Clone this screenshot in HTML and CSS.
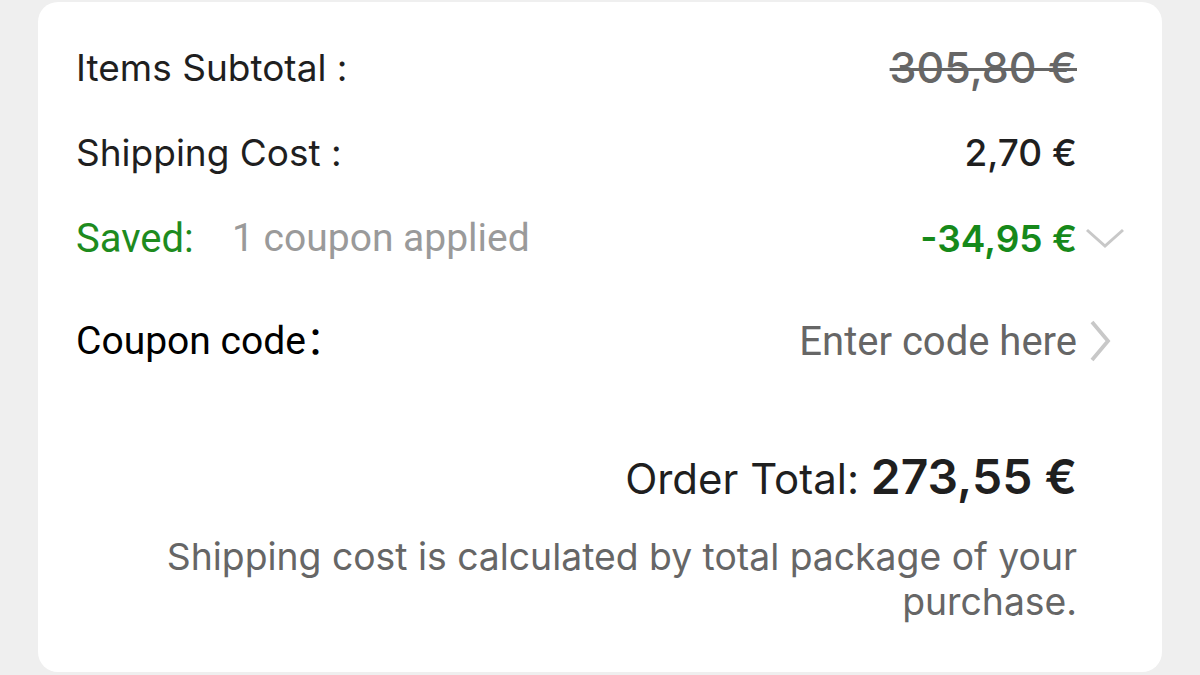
FILE: index.html
```html
<!DOCTYPE html>
<html lang="en">
<head>
  <meta charset="UTF-8">
  <meta name="viewport" content="width=device-width, initial-scale=1.0">
  <title>Order Summary</title>
  <link rel="stylesheet" href="styles.css">
</head>
<body>
  <div class="summary-card">
    <div class="summary-row row-subtotal">
      <span class="row-label">Items Subtotal :</span>
      <span class="row-value old-price">305,80 €</span>
      <span class="row-icon"></span>
    </div>
    <div class="summary-row row-shipping">
      <span class="row-label">Shipping Cost :</span>
      <span class="row-value">2,70 €</span>
      <span class="row-icon"></span>
    </div>
    <div class="summary-row row-saved">
      <span class="row-label saved-label">Saved:</span>
      <span class="coupon-count">1 coupon applied</span>
      <span class="row-value saved-value">-34,95 €</span>
      <span class="row-icon">
        <svg width="40" height="22" viewBox="0 0 40 22"><path d="M2 3 L20 19 L38 3" fill="none" stroke="#c8c8c8" stroke-width="3"/></svg>
      </span>
    </div>
    <div class="summary-row row-coupon">
      <span class="row-label coupon-label">Coupon code<span class="cjk-colon">：</span></span>
      <span class="row-value code-input">Enter code here</span>
      <span class="row-icon icon-right">
        <svg width="22" height="42" viewBox="0 0 22 42"><path d="M3 2 L19 21 L3 40" fill="none" stroke="#c8c8c8" stroke-width="3.8"/></svg>
      </span>
    </div>
    <div class="order-total">
      <span class="total-label">Order Total:</span>
      <span class="total-value">273,55 €</span>
    </div>
    <p class="shipping-note">Shipping cost is calculated by total package of your purchase.</p>
  </div>
</body>
</html>
```

FILE: styles.css
```css
body {
  margin: 0;
  background-color: #efefef;
  font-family: "Inter", "Roboto", sans-serif;
  color: #1f1f1f;
}

.summary-card {
  margin: 2px 38px 0;
  height: 670px;
  box-sizing: border-box;
  padding: 43px 37px 0 38px;
  background-color: #fff;
  border-radius: 20px;
}

.summary-row {
  display: flex;
  align-items: center;
  height: 44px;
  font-size: 37px;
}

.row-shipping {
  margin-top: 41px;
}

.row-saved {
  margin-top: 42px;
}

.row-coupon {
  margin-top: 59px;
}

.row-label {
  flex: 1;
}

.row-value {
  font-weight: 500;
}

.old-price {
  font-size: 43px;
  color: #666;
  text-decoration: line-through;
  text-decoration-thickness: 3px;
}

.row-icon {
  display: flex;
  justify-content: flex-end;
  width: 48px;
}

.icon-right {
  justify-content: flex-start;
  padding-left: 12px;
  box-sizing: border-box;
}

.saved-label {
  flex: none;
  width: 156px;
  font-size: 40px;
  color: #1e8b1e;
  font-family: "Roboto", sans-serif;
}

.coupon-count {
  flex: 1;
  font-size: 39px;
  color: #9a9a9a;
  font-family: "Roboto", sans-serif;
}

.saved-value {
  color: #16891a;
  font-weight: 600;
}

.coupon-label {
  font-size: 39px;
  color: #000;
  font-family: "Roboto", sans-serif;
}

.cjk-colon {
  font-family: "Noto Sans CJK SC", sans-serif;
  line-height: 0;
}

.code-input {
  font-size: 40px;
  color: #666;
  font-weight: 400;
  font-family: "Roboto", sans-serif;
}

.order-total {
  margin: 86px 48px 0 0;
  height: 56px;
  line-height: 56px;
  text-align: right;
  font-size: 42px;
}

.total-value {
  font-size: 48px;
  font-weight: 600;
}

.shipping-note {
  margin: 29px 48px 0 0;
  text-align: right;
  font-size: 37.3px;
  line-height: 45px;
  color: #666;
}
```
